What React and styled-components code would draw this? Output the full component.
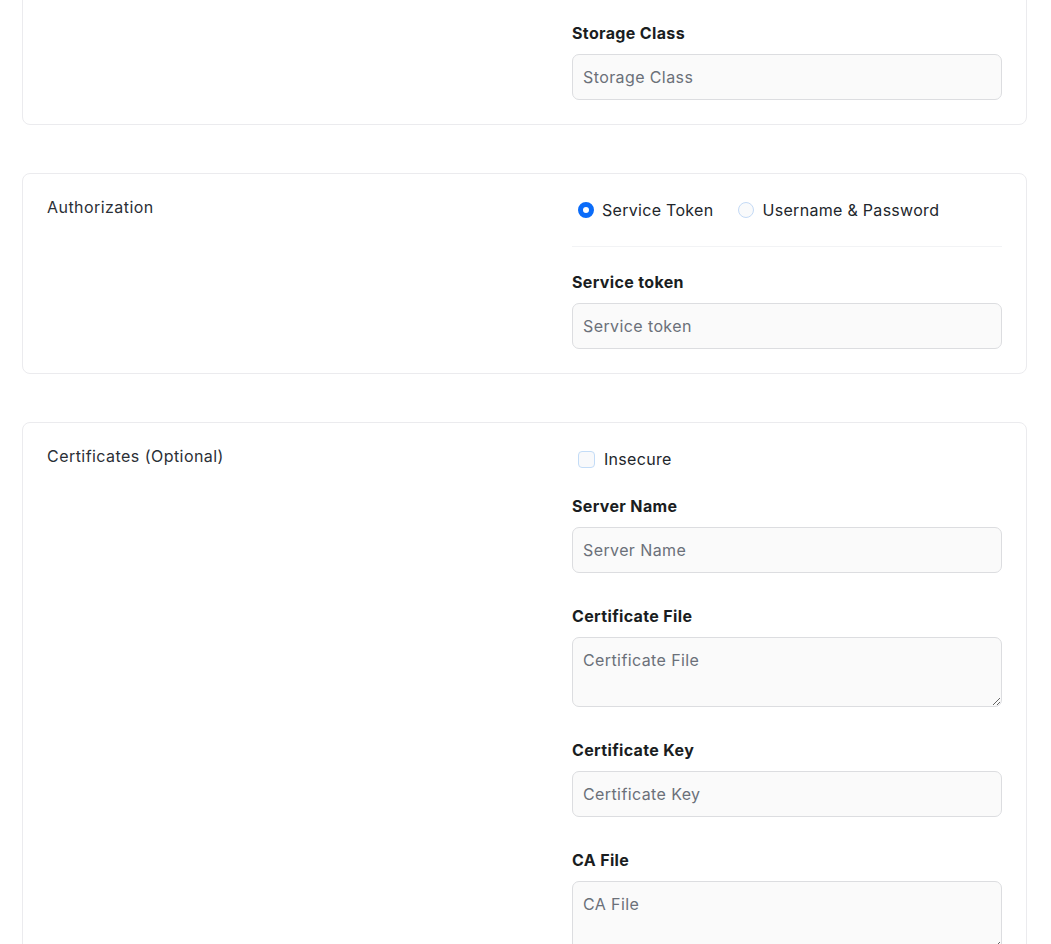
import React from "react";
import styled, { createGlobalStyle } from "styled-components";

const GlobalStyle = createGlobalStyle`
  html, body { margin: 0; padding: 0; background: #ffffff; }
  body {
    font-family: Inter, "Open Sans", "Liberation Sans", sans-serif;
    color: #1f2328;
    overflow: hidden;
    -webkit-font-smoothing: antialiased;
  }
  * { box-sizing: border-box; }
`;

const Page = styled.div`
  display: flex;
  flex-direction: column;
  gap: 48px;
  width: 1005px;
  margin: -114px 0 0 22px;
`;

const Card = styled.section`
  display: grid;
  grid-template-columns: 1fr 430px;
  border: 1px solid #ebebee;
  border-radius: 8px;
  padding: 24px;
  background: #ffffff;
`;

const SectionTitle = styled.h3`
  margin: 0;
  font-size: 16px;
  line-height: 18px;
  font-weight: 400;
  letter-spacing: 0.45px;
  color: #2b2f36;
`;

const Stack = styled.div`
  display: flex;
  flex-direction: column;
  gap: ${(p) => p.$gap}px;
`;

const Field = styled.div`
  display: flex;
  flex-direction: column;
`;

const Label = styled.label`
  font-size: 16px;
  line-height: 24px;
  font-weight: 700;
  letter-spacing: 0.35px;
  color: #1a1d21;
  margin-bottom: 9px;
`;

const inputBase = `
  width: 100%;
  font-family: inherit;
  font-size: 16px;
  line-height: 24px;
  letter-spacing: 0.4px;
  padding: 10px 10px;
  border: 1px solid #dcdde0;
  border-radius: 7px;
  background: #fafafa;
  color: #1f2328;
  outline: none;
  &::placeholder { color: #6b7079; opacity: 1; }
`;

const TextInput = styled.input`
  ${inputBase}
  height: 46px;
`;

const TextArea = styled.textarea`
  ${inputBase}
  display: block;
  height: 70px;
  resize: vertical;
`;

const OptionRow = styled.div`
  display: flex;
  align-items: center;
  gap: 25px;
  height: 24px;
  padding-left: 6px;
`;

const Option = styled.label`
  display: flex;
  align-items: center;
  gap: ${(p) => p.$gap || 8}px;
  font-size: 16px;
  line-height: 24px;
  letter-spacing: 0.3px;
  color: #22262b;
  cursor: pointer;
`;

const Radio = styled.input.attrs({ type: "radio" })`
  appearance: none;
  margin: 0;
  width: 16px;
  height: 16px;
  border-radius: 50%;
  border: 1px solid #c4daf6;
  background: #f9fafb;
  &:checked {
    border: 5px solid #0b6cf9;
    background: #ffffff;
  }
`;

const Checkbox = styled.input.attrs({ type: "checkbox" })`
  appearance: none;
  margin: 0;
  width: 17px;
  height: 17px;
  border-radius: 4px;
  border: 1px solid #c3dcf7;
  background: #f8f9fb;
`;

const Divider = styled.hr`
  margin: 0 0 -1px;
  border: none;
  height: 1px;
  background: #f2f3f5;
`;

const CheckRow = styled(OptionRow)`
  margin-bottom: -1px;
`;

function TextField({ label, multiline }) {
  return (
    <Field>
      <Label>{label}</Label>
      {multiline ? (
        <TextArea rows={2} placeholder={label} />
      ) : (
        <TextInput placeholder={label} />
      )}
    </Field>
  );
}

export default function App() {
  return (
    <>
      <GlobalStyle />
      <Page>
        <Card>
          <SectionTitle>Storage</SectionTitle>
          <Stack $gap={31}>
            <TextField label="Bucket" />
            <TextField label="Storage Class" />
          </Stack>
        </Card>

        <Card>
          <SectionTitle>Authorization</SectionTitle>
          <Stack $gap={24}>
            <OptionRow>
              <Option>
                <Radio name="auth" defaultChecked />
                Service Token
              </Option>
              <Option>
                <Radio name="auth" />
                Username &amp; Password
              </Option>
            </OptionRow>
            <Divider />
            <TextField label="Service token" />
          </Stack>
        </Card>

        <Card>
          <SectionTitle>Certificates (Optional)</SectionTitle>
          <Stack $gap={24}>
            <CheckRow>
              <Option $gap={9}>
                <Checkbox />
                Insecure
              </Option>
            </CheckRow>
            <Stack $gap={31}>
              <TextField label="Server Name" />
              <TextField label="Certificate File" multiline />
              <TextField label="Certificate Key" />
              <TextField label="CA File" multiline />
            </Stack>
          </Stack>
        </Card>
      </Page>
    </>
  );
}
